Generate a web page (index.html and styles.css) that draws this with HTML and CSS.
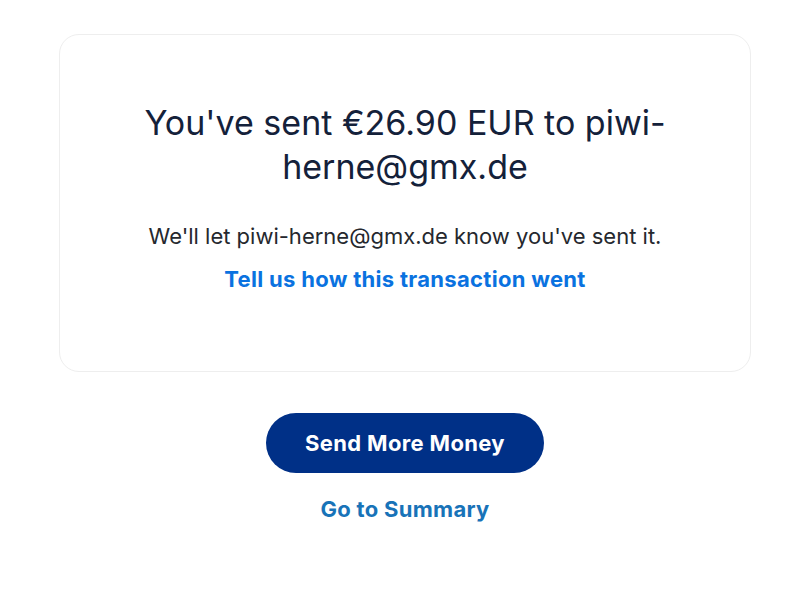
FILE: index.html
```html
<!DOCTYPE html>
<html lang="en">
<head>
<meta charset="utf-8">
<title>Sent</title>
<link rel="stylesheet" href="styles.css">
</head>
<body>
<main class="page">
  <section class="card">
    <h1 class="title">You've sent €26.90 EUR to piwi-<br>herne@gmx.de</h1>
    <p class="note">We'll let piwi-herne@gmx.de know you've sent it.</p>
    <a class="feedback" href="#">Tell us how this transaction went</a>
  </section>
  <div class="actions">
    <button class="primary" type="button">Send More Money</button>
    <a class="summary" href="#">Go to Summary</a>
  </div>
</main>
</body>
</html>
```

FILE: styles.css
```css
html, body {
  margin: 0;
  padding: 0;
  background: #ffffff;
}
body {
  font-family: Inter, "Liberation Sans", sans-serif;
  color: #1c2431;
}
.page {
  padding: 34px 49px 0 59px;
  display: flex;
  flex-direction: column;
  align-items: center;
}
.card {
  box-sizing: border-box;
  width: 692px;
  height: 338px;
  border: 1px solid #eeeeee;
  border-radius: 20px;
  display: flex;
  flex-direction: column;
  align-items: center;
  padding-top: 66px;
}
.title {
  margin: 0;
  font-size: 34px;
  line-height: 44px;
  font-weight: 400;
  text-align: center;
  color: #14213a;
}
.note {
  margin: 33px 0 0;
  font-size: 22px;
  line-height: 28px;
  color: #25282e;
}
.feedback {
  margin-top: 15px;
  font-size: 22px;
  line-height: 28px;
  font-weight: 700;
  letter-spacing: 0.3px;
  color: #0a72e0;
  text-decoration: none;
}
.actions {
  display: flex;
  flex-direction: column;
  align-items: center;
  margin-top: 41px;
}
.primary {
  width: 278px;
  height: 60px;
  border: none;
  border-radius: 30px;
  background: #003087;
  color: #ffffff;
  font-family: inherit;
  font-size: 22px;
  font-weight: 700;
  letter-spacing: 0.35px;
}
.summary {
  margin-top: 22px;
  font-size: 22px;
  line-height: 28px;
  font-weight: 700;
  letter-spacing: 0.3px;
  color: #1873b8;
  text-decoration: none;
}
```
